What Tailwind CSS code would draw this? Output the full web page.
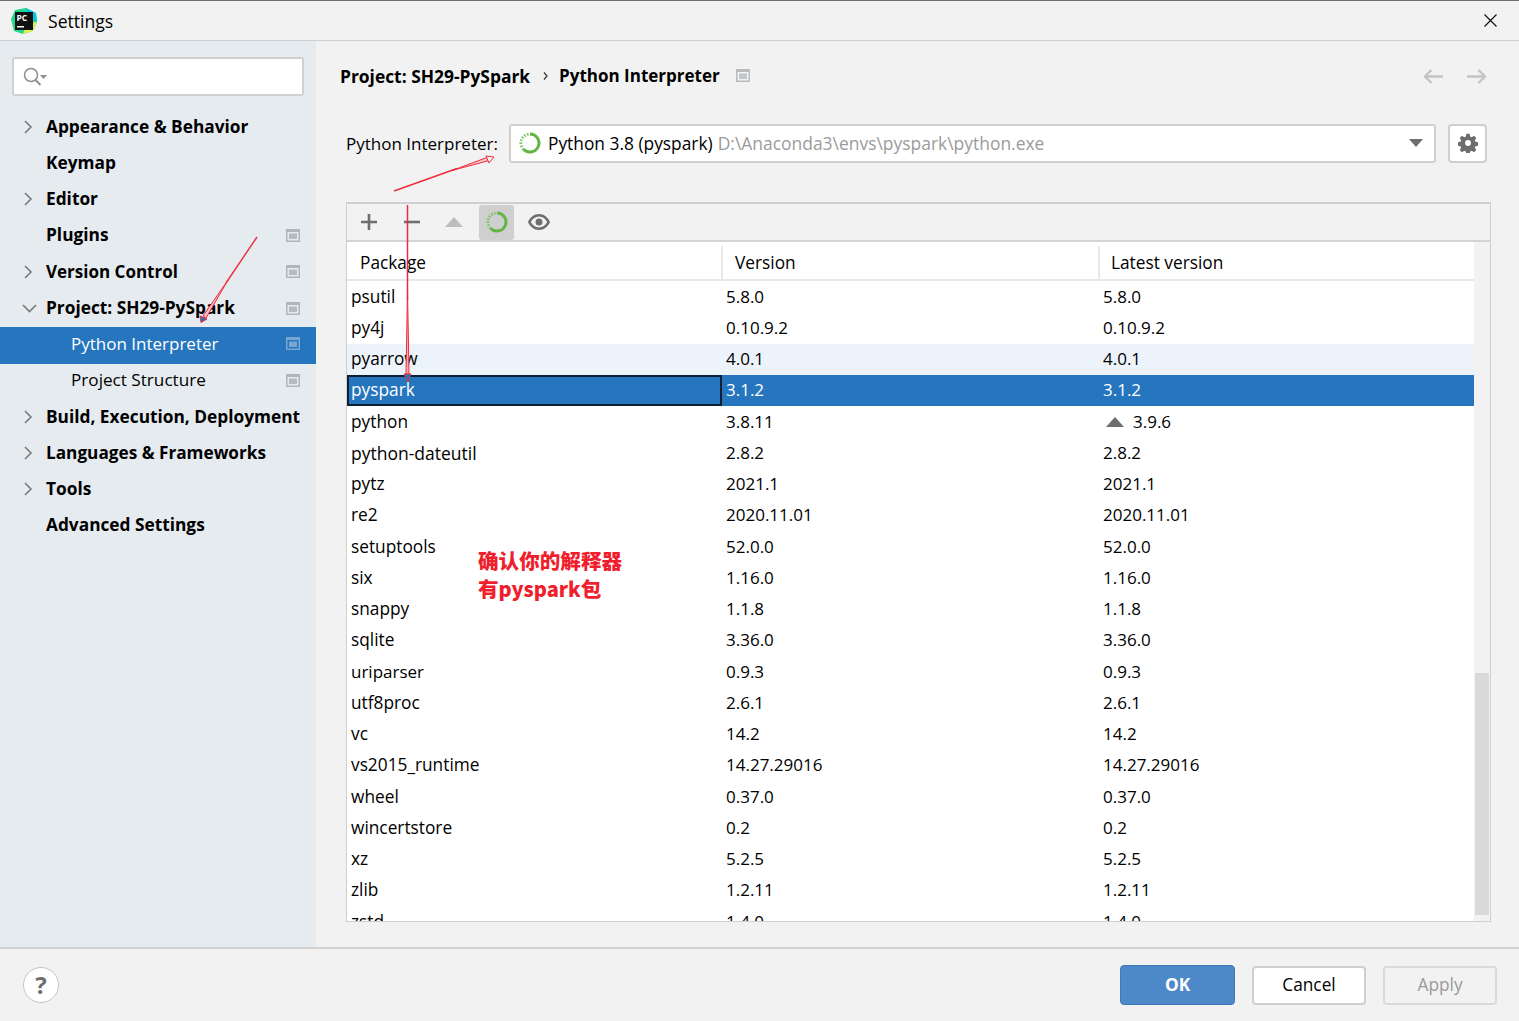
<!DOCTYPE html>
<html lang="en">
<head>
<meta charset="utf-8"/>
<title>Settings</title>
<script src="https://cdn.jsdelivr.net/npm/@tailwindcss/browser@4"></script>
</head>
<body class="m-0 overflow-hidden bg-[#f2f2f2] font-['Open_Sans','Noto_Sans',sans-serif] text-[17.3px] text-black">
<div class="relative flex h-[1021px] w-[1519px] flex-col overflow-hidden">

  <!-- title bar -->
  <header class="flex h-[41px] shrink-0 items-center border-t border-b border-t-[#6e6e6e] border-b-[#cfcfcf] bg-[#f2f2f2] pl-[11px] pr-[22px]">
    <svg class="h-[26px] w-[26px]" viewBox="0 0 26 26">
      <path d="M4 2 L15 0 L25 5 L26 14 L22 23 L12 26 L3 23 L0 11Z" fill="#21d789"/>
      <path d="M15 0 L25 5 L26 14 L18 10Z" fill="#09c4e8"/>
      <path d="M12 26 L22 23 L26 14 L16 15Z" fill="#e4f04a"/>
      <rect x="4" y="4" width="18" height="18" fill="#111"/>
      <text x="5.500" y="12.500" font-size="8.500" font-weight="700" fill="#fff" font-family="Open Sans">PC</text>
      <rect x="6" y="18" width="7" height="1.500" fill="#fff"/>
    </svg>
    <span class="ml-[11px] pt-[1px] text-[17.6px]">Settings</span>
    <svg class="ml-auto h-[13px] w-[13px]" viewBox="0 0 13 13"><path d="M.5.5l12 12M12.5.5l-12 12" stroke="#111" stroke-width="1.2" fill="none"/></svg>
  </header>

  <div class="flex min-h-0 flex-1">
    <!-- sidebar -->
    <aside class="w-[316px] shrink-0 bg-[#e6ebf0] pt-[16px]">
      <div class="mx-[12px] flex h-[39px] items-center rounded-[3px] border-2 border-[#cfd1d3] bg-white pl-[9px]">
        <svg class="h-[20px] w-[28px]" viewBox="0 0 28 20"><circle cx="8" cy="8" r="6.500" fill="none" stroke="#8c8f92" stroke-width="1.500"/><path d="M12.500 13l5 5" stroke="#8c8f92" stroke-width="2"/><path d="M17 8h7l-3.500 4z" fill="#8c8f92"/></svg>
      </div>
      <nav class="mt-[12.7px] font-bold">
        <div class="flex h-[36.2px] items-center pl-[24px]"><svg class="h-[14px] w-[9px]" viewBox="0 0 9 14"><path d="M1 1l6 6-6 6" fill="none" stroke="#7a7a7a" stroke-width="1.600"/></svg><span class="ml-[13px]">Appearance &amp; Behavior</span></div>
        <div class="flex h-[36.2px] items-center pl-[46px]">Keymap</div>
        <div class="flex h-[36.2px] items-center pl-[24px]"><svg class="h-[14px] w-[9px]" viewBox="0 0 9 14"><path d="M1 1l6 6-6 6" fill="none" stroke="#7a7a7a" stroke-width="1.600"/></svg><span class="ml-[13px]">Editor</span></div>
        <div class="flex h-[36.2px] items-center justify-between pl-[46px] pr-[16px]">Plugins<svg class="h-[13px] w-[14px]" viewBox="0 0 14 13"><rect width="14" height="13" fill="#aeb6bd"/><rect x="1.500" y="3" width="11" height="8.500" fill="#e6ebf0"/><rect x="3" y="4.500" width="8" height="5.500" fill="#b4bcc3"/></svg></div>
        <div class="flex h-[36.2px] items-center justify-between pl-[24px] pr-[16px]"><span class="flex items-center"><svg class="h-[14px] w-[9px]" viewBox="0 0 9 14"><path d="M1 1l6 6-6 6" fill="none" stroke="#7a7a7a" stroke-width="1.600"/></svg><span class="ml-[13px] text-[17px]">Version Control</span></span><svg class="h-[13px] w-[14px]" viewBox="0 0 14 13"><rect width="14" height="13" fill="#aeb6bd"/><rect x="1.500" y="3" width="11" height="8.500" fill="#e6ebf0"/><rect x="3" y="4.500" width="8" height="5.500" fill="#b4bcc3"/></svg></div>
        <div class="flex h-[37.3px] items-center justify-between pl-[22px] pr-[16px]"><span class="flex items-center"><svg class="h-[9px] w-[15px]" viewBox="0 0 15 9"><path d="M1 1l6.500 6.500L14 1" fill="none" stroke="#7a7a7a" stroke-width="1.600"/></svg><span class="ml-[9px]">Project: SH29-PySpark</span></span><svg class="h-[13px] w-[14px]" viewBox="0 0 14 13"><rect width="14" height="13" fill="#aeb6bd"/><rect x="1.500" y="3" width="11" height="8.500" fill="#e6ebf0"/><rect x="3" y="4.500" width="8" height="5.500" fill="#b4bcc3"/></svg></div>
        <div class="flex h-[37px] items-center justify-between bg-[#2675bf] pb-[3px] pl-[71px] pr-[16px] text-[17px] font-normal text-white">Python Interpreter<svg class="h-[13px] w-[14px]" viewBox="0 0 14 13"><rect width="14" height="13" fill="#7ba6d0"/><rect x="1.500" y="3" width="11" height="8.500" fill="#2675bf"/><rect x="3" y="4.500" width="8" height="5.500" fill="#7ba6d0"/></svg></div>
        <div class="flex h-[34.6px] items-center justify-between pb-[2px] pl-[71px] pr-[16px] text-[17.15px] font-normal">Project Structure<svg class="h-[13px] w-[14px]" viewBox="0 0 14 13"><rect width="14" height="13" fill="#aeb6bd"/><rect x="1.500" y="3" width="11" height="8.500" fill="#e6ebf0"/><rect x="3" y="4.500" width="8" height="5.500" fill="#b4bcc3"/></svg></div>
        <div class="flex h-[36.2px] items-center pl-[24px]"><svg class="h-[14px] w-[9px]" viewBox="0 0 9 14"><path d="M1 1l6 6-6 6" fill="none" stroke="#7a7a7a" stroke-width="1.600"/></svg><span class="ml-[13px]">Build, Execution, Deployment</span></div>
        <div class="flex h-[36.2px] items-center pl-[24px]"><svg class="h-[14px] w-[9px]" viewBox="0 0 9 14"><path d="M1 1l6 6-6 6" fill="none" stroke="#7a7a7a" stroke-width="1.600"/></svg><span class="ml-[13px] text-[17.2px]">Languages &amp; Frameworks</span></div>
        <div class="flex h-[36.2px] items-center pl-[24px]"><svg class="h-[14px] w-[9px]" viewBox="0 0 9 14"><path d="M1 1l6 6-6 6" fill="none" stroke="#7a7a7a" stroke-width="1.600"/></svg><span class="ml-[13px]">Tools</span></div>
        <div class="flex h-[36.2px] items-center pl-[46px]">Advanced Settings</div>
      </nav>
    </aside>

    <!-- main panel -->
    <main class="flex min-w-0 flex-1 flex-col pl-[30px] pr-[28px]">
      <div class="flex h-[70px] shrink-0 items-center">
        <div class="-ml-[6px] flex items-center font-bold">
          <span class="text-[17.4px]">Project: SH29-PySpark</span>
          <svg class="ml-[13px] mr-[11px] h-[8px] w-[5px]" viewBox="0 0 5 8"><path d="M1 .5L4 4 1 7.500" fill="none" stroke="#333" stroke-width="1.200"/></svg>
          <span class="text-[17px]">Python Interpreter</span>
          <svg class="ml-[16px] h-[13px] w-[14px]" viewBox="0 0 14 13"><rect width="14" height="13" fill="#b9bcbf"/><rect x="1.500" y="3" width="11" height="8.500" fill="#f2f2f2"/><rect x="3" y="4.500" width="8" height="5.500" fill="#c4c7ca"/></svg>
        </div>
        <div class="ml-auto mr-[4px] flex gap-[24px]">
          <svg class="h-[15px] w-[20px]" viewBox="0 0 20 15"><path d="M20 7.500H2M8.500 1L2 7.500 8.500 14" fill="none" stroke="#c4c4c4" stroke-width="2.400"/></svg>
          <svg class="h-[15px] w-[20px]" viewBox="0 0 20 15"><path d="M0 7.500h18M11.500 1L18 7.500 11.500 14" fill="none" stroke="#c4c4c4" stroke-width="2.400"/></svg>
        </div>
      </div>

      <div class="mt-[12px] flex h-[40px] shrink-0 items-center">
        <span class="w-[163px] pt-[2px] text-[17px]">Python Interpreter:</span>
        <div class="flex h-[39px] w-[927px] items-center rounded-[3px] border-2 border-[#cfcfcf] bg-white pl-[8px] pr-[11px]">
          <svg class="h-[22px] w-[22px]" viewBox="0 0 22 22"><path d="M11 2A9 9 0 1 1 4.600 17.400" fill="none" stroke="#62b543" stroke-width="3"/><path d="M4.600 17.400A9 9 0 0 1 11 2" fill="none" stroke="#7cc465" stroke-width="3" stroke-dasharray="1.500 1.500"/></svg>
          <span class="ml-[7px] pt-[1px] text-[17.35px]">Python 3.8 (pyspark)</span>
          <span class="ml-[5px] pt-[1px] text-[17.45px] text-[#9b9b9b]">D:\Anaconda3\envs\pyspark\python.exe</span>
          <svg class="ml-auto h-[8px] w-[14px]" viewBox="0 0 14 8"><path d="M0 0h14L7 8z" fill="#6e6e6e"/></svg>
        </div>
        <button class="ml-[12px] flex h-[39px] w-[39px] items-center justify-center rounded-[4px] border-2 border-[#cfcfcf] bg-white">
          <svg class="h-[20px] w-[20px]" viewBox="0 0 24 24"><path fill="#6e6e6e" fill-rule="evenodd" d="M10 1h4l.6 3.200 1.900.8 2.700-1.800 2.800 2.800-1.800 2.700.8 1.900 3 .6v4l-3 .6-.8 1.900 1.800 2.700-2.800 2.800-2.700-1.800-1.900.8-.6 3h-4l-.6-3-1.900-.8-2.700 1.800-2.800-2.800 1.800-2.700-.8-1.900-3-.6v-4l3-.6.8-1.900-1.800-2.700 2.800-2.800 2.700 1.800 1.900-.8zM12 8.500a3.500 3.500 0 1 0 0 7 3.500 3.500 0 0 0 0-7z"/></svg>
        </button>
      </div>

      <!-- package table -->
      <section class="mt-[39px] flex h-[720px] w-[1145px] shrink-0 flex-col border-2 border-b border-l border-r border-[#cfcfcf]">
        <div class="flex h-[38px] shrink-0 items-center border-b-2 border-[#d4d4d4] bg-[#f2f2f2]">
          <svg class="ml-[14px] h-[16px] w-[16px]" viewBox="0 0 16 16"><path d="M8 0v16M0 8h16" stroke="#6e6e6e" stroke-width="2.600"/></svg>
          <svg class="ml-[27px] h-[16px] w-[16px]" viewBox="0 0 16 16"><path d="M0 8h16" stroke="#6e6e6e" stroke-width="2.600"/></svg>
          <svg class="ml-[25px] h-[10px] w-[18px]" viewBox="0 0 18 10"><path d="M9 0l9 10H0z" fill="#bdbdbd"/></svg>
          <div class="ml-[16px] flex h-[35px] w-[35px] items-center justify-center rounded-[3px] bg-[#cfcfcf]">
            <svg class="h-[22px] w-[22px]" viewBox="0 0 22 22"><path d="M11 2A9 9 0 1 1 4.600 17.400" fill="none" stroke="#62b543" stroke-width="3"/><path d="M4.600 17.400A9 9 0 0 1 11 2" fill="none" stroke="#7cc465" stroke-width="3" stroke-dasharray="1.500 1.500"/></svg>
          </div>
          <svg class="ml-[14px] h-[16px] w-[22px]" viewBox="0 0 22 16"><path fill="#6e6e6e" fill-rule="evenodd" d="M11 0c5 0 9 3.500 11 8-2 4.500-6 8-11 8S2 12.500 0 8c2-4.500 6-8 11-8zm0 2.500C7.500 2.500 4.500 4.700 2.800 8c1.700 3.300 4.700 5.500 8.200 5.500s6.500-2.200 8.200-5.500C17.500 4.700 14.500 2.500 11 2.500zM11 4.500a3.500 3.500 0 1 1 0 7 3.500 3.500 0 0 1 0-7z"/></svg>
        </div>
        <div class="flex min-h-0 flex-1">
          <div class="min-w-0 flex-1 overflow-hidden bg-white leading-[24px]">
            <div class="flex h-[39px] items-center border-b-2 border-[#e8e8e8] pt-[4px]">
              <div class="flex h-[33px] w-[376px] items-center border-r-2 border-[#e8e8e8] pl-[13px]">Package</div>
              <div class="flex h-[33px] w-[377px] items-center border-r-2 border-[#e8e8e8] pl-[12px]">Version</div>
              <div class="pl-[11px]">Latest version</div>
            </div>
            <div class="flex h-[31.25px] items-center"><div class="w-[375px] pl-[4px]">psutil</div><div class="w-[377px] pl-[4px] text-[17px]">5.8.0</div><div class="pl-[4px] text-[17px]">5.8.0</div></div>
            <div class="flex h-[31.25px] items-center"><div class="w-[375px] pl-[4px]">py4j</div><div class="w-[377px] pl-[4px] text-[17px]">0.10.9.2</div><div class="pl-[4px] text-[17px]">0.10.9.2</div></div>
            <div class="flex h-[31.25px] items-center bg-[#edf3fb]"><div class="w-[375px] pl-[4px]">pyarrow</div><div class="w-[377px] pl-[4px] text-[17px]">4.0.1</div><div class="pl-[4px] text-[17px]">4.0.1</div></div>
            <div class="flex h-[31.25px] items-center bg-[#2675bf] text-white"><div class="flex h-full w-[375px] items-center border-2 border-[#0d1f33] pl-[2px]">pyspark</div><div class="w-[377px] pl-[4px] text-[17px]">3.1.2</div><div class="pl-[4px] text-[17px]">3.1.2</div></div>
            <div class="flex h-[31.25px] items-center"><div class="w-[375px] pl-[4px]">python</div><div class="w-[377px] pl-[4px] text-[17px]">3.8.11</div><div class="flex items-center pl-[7px] text-[17px]"><svg class="h-[10px] w-[18px]" viewBox="0 0 18 10"><path d="M9 0l9 10H0z" fill="#6e6e6e"/></svg><span class="ml-[9px]">3.9.6</span></div></div>
            <div class="flex h-[31.25px] items-center"><div class="w-[375px] pl-[4px] text-[17.5px]">python-dateutil</div><div class="w-[377px] pl-[4px] text-[17px]">2.8.2</div><div class="pl-[4px] text-[17px]">2.8.2</div></div>
            <div class="flex h-[31.25px] items-center"><div class="w-[375px] pl-[4px]">pytz</div><div class="w-[377px] pl-[4px] text-[17px]">2021.1</div><div class="pl-[4px] text-[17px]">2021.1</div></div>
            <div class="flex h-[31.25px] items-center"><div class="w-[375px] pl-[4px]">re2</div><div class="w-[377px] pl-[4px] text-[17px]">2020.11.01</div><div class="pl-[4px] text-[17px]">2020.11.01</div></div>
            <div class="flex h-[31.25px] items-center"><div class="w-[375px] pl-[4px]">setuptools</div><div class="w-[377px] pl-[4px] text-[17px]">52.0.0</div><div class="pl-[4px] text-[17px]">52.0.0</div></div>
            <div class="flex h-[31.25px] items-center"><div class="w-[375px] pl-[4px]">six</div><div class="w-[377px] pl-[4px] text-[17px]">1.16.0</div><div class="pl-[4px] text-[17px]">1.16.0</div></div>
            <div class="flex h-[31.25px] items-center"><div class="w-[375px] pl-[4px]">snappy</div><div class="w-[377px] pl-[4px] text-[17px]">1.1.8</div><div class="pl-[4px] text-[17px]">1.1.8</div></div>
            <div class="flex h-[31.25px] items-center"><div class="w-[375px] pl-[4px]">sqlite</div><div class="w-[377px] pl-[4px] text-[17px]">3.36.0</div><div class="pl-[4px] text-[17px]">3.36.0</div></div>
            <div class="flex h-[31.25px] items-center"><div class="w-[375px] pl-[4px] text-[17px]">uriparser</div><div class="w-[377px] pl-[4px] text-[17px]">0.9.3</div><div class="pl-[4px] text-[17px]">0.9.3</div></div>
            <div class="flex h-[31.25px] items-center"><div class="w-[375px] pl-[4px]">utf8proc</div><div class="w-[377px] pl-[4px] text-[17px]">2.6.1</div><div class="pl-[4px] text-[17px]">2.6.1</div></div>
            <div class="flex h-[31.25px] items-center"><div class="w-[375px] pl-[4px]">vc</div><div class="w-[377px] pl-[4px] text-[17px]">14.2</div><div class="pl-[4px] text-[17px]">14.2</div></div>
            <div class="flex h-[31.25px] items-center"><div class="w-[375px] pl-[4px]">vs2015_runtime</div><div class="w-[377px] pl-[4px] text-[17px]">14.27.29016</div><div class="pl-[4px] text-[17px]">14.27.29016</div></div>
            <div class="flex h-[31.25px] items-center"><div class="w-[375px] pl-[4px]">wheel</div><div class="w-[377px] pl-[4px] text-[17px]">0.37.0</div><div class="pl-[4px] text-[17px]">0.37.0</div></div>
            <div class="flex h-[31.25px] items-center"><div class="w-[375px] pl-[4px]">wincertstore</div><div class="w-[377px] pl-[4px] text-[17px]">0.2</div><div class="pl-[4px] text-[17px]">0.2</div></div>
            <div class="flex h-[31.25px] items-center"><div class="w-[375px] pl-[4px]">xz</div><div class="w-[377px] pl-[4px] text-[17px]">5.2.5</div><div class="pl-[4px] text-[17px]">5.2.5</div></div>
            <div class="flex h-[31.25px] items-center"><div class="w-[375px] pl-[4px]">zlib</div><div class="w-[377px] pl-[4px] text-[17px]">1.2.11</div><div class="pl-[4px] text-[17px]">1.2.11</div></div>
            <div class="flex h-[31.25px] items-center"><div class="w-[375px] pl-[4px]">zstd</div><div class="w-[377px] pl-[4px] text-[17px]">1.4.0</div><div class="pl-[4px] text-[17px]">1.4.0</div></div>
          </div>
          <div class="flex w-[16px] shrink-0 flex-col justify-end bg-[#f2f2f2] pb-[6px]"><div class="ml-[1px] h-[242px] w-[14px] bg-[#d9d9d9]"></div></div>
        </div>
      </section>
    </main>
  </div>

  <footer class="flex h-[74px] shrink-0 items-center border-t-2 border-[#d1d1d1] bg-[#f2f2f2] pl-[23px] pr-[22px]">
    <div class="flex h-[36px] w-[36px] items-center justify-center rounded-full border border-[#c4c4c4] bg-white text-[24px] font-bold text-[#6e6e6e]">?</div>
    <button class="ml-auto h-[40px] w-[115px] rounded-[4px] border border-[#3f78b5] bg-[#4d88c9] font-bold text-white">OK</button>
    <button class="ml-[17px] h-[39px] w-[114px] rounded-[4px] border-2 border-[#cfcfcf] bg-white">Cancel</button>
    <button class="ml-[17px] h-[39px] w-[114px] rounded-[4px] border-2 border-[#d9d9d9] text-[#9a9a9a]">Apply</button>
  </footer>

  <!-- screenshot annotations on top of the dialog -->
  <svg class="pointer-events-none absolute left-0 top-0 h-[1021px] w-[1519px]" viewBox="0 0 1519 1021">
    <g fill="none" stroke="#ee2b3b">
      <path d="M394 191L457 168.500" stroke-width="1.400"/>
      <path d="M452 170.500L487 157.500L489 160.500Z" fill="#f9c5c9" stroke-width="1"/>
      <path d="M486 156L494 157L489 163Z" fill="#f2f2f2" stroke-width="1"/>
      <path d="M257 237L226 283" stroke-width="1.400"/>
      <path d="M228 280L203 316L206 318Z" fill="#f5c0c5" stroke-width="1"/>
      <path d="M200 316L201 322.500L207 319Z" fill="#2675bf" stroke-width="1"/>
      <path d="M407.500 205V300" stroke-width="1.500"/>
      <path d="M407.500 290L406 374H409Z" fill="#f5b0b6" stroke-width="1"/>
      <path d="M404 374L407.500 382L411 374Z" fill="#2675bf" stroke-width="1"/>
    </g>
  </svg>
  <div class="absolute left-[478px] top-[546px] font-['Noto_Sans_CJK_SC','Open_Sans',sans-serif] text-[20.6px] leading-[28px] font-black text-[#f01f2e] [text-shadow:0_0_3px_#fff,0_0_3px_#fff,0_0_3px_#fff]">确认你的解释器<br/>有<span class="text-[20px]">pyspark</span>包</div>
</div>
</body>
</html>
